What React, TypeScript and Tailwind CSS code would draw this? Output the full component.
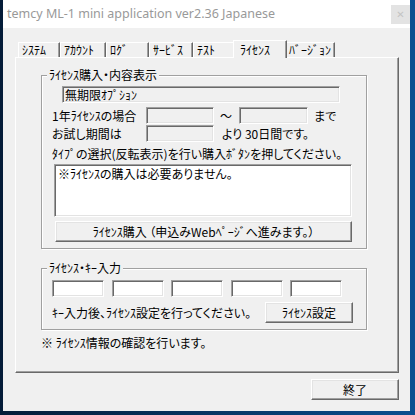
const jp = "font-['Noto_Sans_CJK_JP','Noto_Sans_CJK_SC',sans-serif] [font-feature-settings:'palt']";

const sunken =
  "border border-t-[#a0a0a0] border-l-[#a0a0a0] border-r-white border-b-white shadow-[inset_1px_1px_0_#696969,inset_-1px_-1px_0_#e3e3e3]";
const raised =
  "border border-t-white border-l-white border-r-[#696969] border-b-[#696969] shadow-[inset_-1px_-1px_0_#a0a0a0,inset_1px_1px_0_#e3e3e3] bg-[#f0f0f0]";
const etched = "border border-[#a0a0a0] shadow-[1px_1px_0_#fff,inset_1px_1px_0_#fff]";

const tabs = [
  { label: "ｼｽﾃﾑ", w: "w-[42px]" },
  { label: "ｱｶｳﾝﾄ", w: "w-[46px]" },
  { label: "ﾛｸﾞ", w: "w-[43px]" },
  { label: "ｻｰﾋﾞｽ", w: "w-[44px]" },
  { label: "ﾃｽﾄ", w: "w-[42px]" },
  { label: "ﾗｲｾﾝｽ", w: "w-[54px]", active: true },
  { label: "ﾊﾞｰｼﾞｮﾝ", w: "w-[50px]" },
];

function Field({ className = "", white = false, children }: { className?: string; white?: boolean; children?: React.ReactNode }) {
  return (
    <div className={`${sunken} ${white ? "bg-white" : "bg-[#f0f0f0]"} h-[17px] flex items-center pl-[2px] ${className}`}>
      {children}
    </div>
  );
}

export default function App() {
  return (
    <div className={`w-[415px] h-[415px] bg-gradient-to-r from-[#041c38] to-[#0b4f90] pl-[3px] pr-[5px] pb-[4px] text-[12px] leading-[14px] text-black ${jp}`}>
      <div className="h-full flex flex-col bg-[#f0f0f0]">
        {/* Title bar */}
        <div className="h-[28px] shrink-0 bg-white flex justify-between pl-[4px]">
          <span className="font-['Noto_Sans',sans-serif] text-[12.5px] leading-[28px] text-[#999]">
            temcy ML-1 mini application ver2.36 Japanese
          </span>
          <div className="mt-[5px] w-[19px] h-[19px] bg-[#e3e3e3] flex items-center justify-center text-[#c4c4c4] text-[10px] font-['DejaVu_Sans',sans-serif]">
            ✕
          </div>
        </div>

        <div className="flex-1 pt-[12px] pl-[12px] flex flex-col">
          {/* Tabs */}
          <div className="flex items-end h-[17px] pl-[3px]">
            {tabs.map((t) =>
              t.active ? (
                <div
                  key={t.label}
                  className={`${t.w} h-[18px] -mb-px -mx-[2px] relative z-10 bg-[#f0f0f0] border-t border-l border-r border-t-white border-l-white border-r-[#696969] shadow-[inset_-1px_0_0_#a0a0a0] flex items-center pl-[6px] whitespace-nowrap`}
                >
                  {t.label}
                </div>
              ) : (
                <div
                  key={t.label}
                  className={`${t.w} h-[15px] bg-[#f0f0f0] border-t border-l border-r border-t-white border-l-white border-r-[#696969] shadow-[inset_-1px_0_0_#a0a0a0] flex items-center pl-[3px] whitespace-nowrap`}
                >
                  {t.label}
                </div>
              ),
            )}
          </div>

          {/* Panel */}
          <div className="w-[384px] h-[316px] border border-t-white border-l-white border-r-[#696969] border-b-[#696969] shadow-[inset_-1px_-1px_0_#a0a0a0] pt-[10px] pl-[25px]">
            <fieldset className={`w-[326px] ${etched} pb-[6px]`}>
              <legend className="ml-[5px] px-[2px] bg-[#f0f0f0]">ﾗｲｾﾝｽ購入・内容表示</legend>
              <Field className="mt-[4px] ml-[20px] w-[278px]">無期限ｵﾌﾟｼｮﾝ</Field>

              <div className="mt-[4px] ml-[10px] flex items-center">
                <span className="w-[94px] whitespace-nowrap">1年ﾗｲｾﾝｽの場合</span>
                <Field className="w-[68px]" />
                <span className="w-[25px] pl-[6px]">～</span>
                <Field className="w-[69px]" />
                <span className="ml-[6px]">まで</span>
              </div>

              <div className="mt-[1px] ml-[10px] flex items-center">
                <span className="w-[94px] whitespace-nowrap">お試し期間は</span>
                <Field className="w-[68px]" />
                <span className="ml-[8px] whitespace-nowrap">より 30日間です。</span>
              </div>

              <div className="mt-[5px] ml-[10px] whitespace-nowrap">
                ﾀｲﾌﾟの選択(反転表示)を行い購入ﾎﾞﾀﾝを押してください。
              </div>

              <div className={`mt-[3px] ml-[12px] w-[298px] h-[53px] bg-white ${sunken} pl-[3px] pt-[2px]`}>
                ※ﾗｲｾﾝｽの購入は必要ありません。
              </div>

              <button className={`mt-[4px] ml-[13px] w-[297px] h-[21px] ${raised} flex items-center justify-center`}>
                ﾗｲｾﾝｽ購入 （申込みWebﾍﾟｰｼﾞへ進みます。）
              </button>
            </fieldset>

            <fieldset className={`mt-[12px] w-[326px] ${etched} pb-[6px]`}>
              <legend className="ml-[5px] px-[2px] bg-[#f0f0f0]">ﾗｲｾﾝｽ・ｷｰ入力</legend>
              <div className="mt-[5px] ml-[10px] flex gap-[7.5px]">
                {[0, 1, 2, 3, 4].map((i) => (
                  <Field key={i} white className="w-[52px]" />
                ))}
              </div>
              <div className="mt-[5px] ml-[10px] flex items-center">
                <span className="w-[213px] whitespace-nowrap">ｷｰ入力後、ﾗｲｾﾝｽ設定を行ってください。</span>
                <button className={`w-[88px] h-[21px] ${raised} flex items-center justify-center`}>ﾗｲｾﾝｽ設定</button>
              </div>
            </fieldset>

            <div className="mt-[6px] whitespace-nowrap">※ ﾗｲｾﾝｽ情報の確認を行います。</div>
          </div>

          <div className="mt-[6px] w-[384px] flex justify-end">
            <button className={`w-[88px] h-[21px] ${raised} flex items-center justify-center`}>終了</button>
          </div>
        </div>
      </div>
    </div>
  );
}
